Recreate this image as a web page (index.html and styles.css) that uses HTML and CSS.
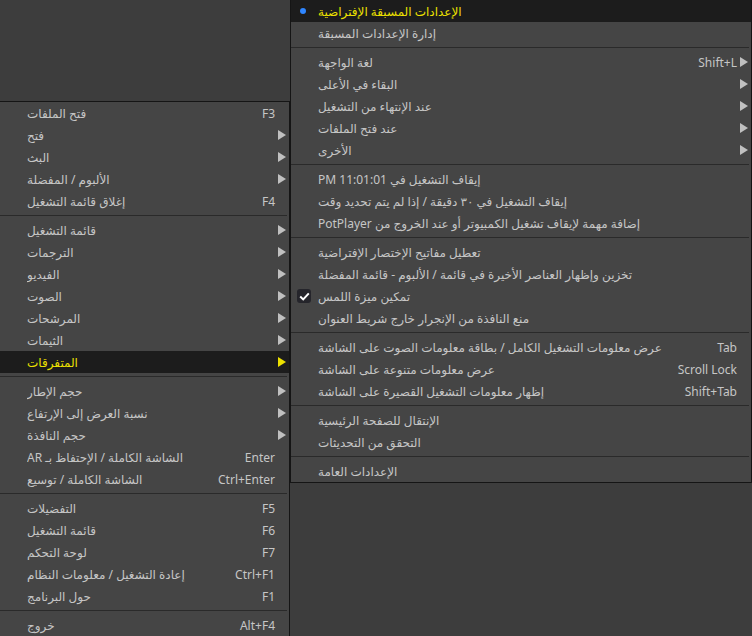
FILE: index.html
```html
<!DOCTYPE html>
<html lang="ar">
<head>
<meta charset="utf-8">
<title>Menu</title>
<link rel="stylesheet" href="styles.css">
</head>
<body>
<div class="desk">
  <div class="menu menu-main">
    <div class="item"><span class="gutter"></span><span class="label"><span dir="rtl">فتح الملفات</span></span><span class="key">F3</span><span class="sub"></span></div>
    <div class="item"><span class="gutter"></span><span class="label"><span dir="rtl">فتح</span></span><span class="key"></span><span class="sub arrow"></span></div>
    <div class="item"><span class="gutter"></span><span class="label"><span dir="rtl">البث</span></span><span class="key"></span><span class="sub arrow"></span></div>
    <div class="item"><span class="gutter"></span><span class="label"><span dir="rtl">الألبوم / المفضلة</span></span><span class="key"></span><span class="sub arrow"></span></div>
    <div class="item"><span class="gutter"></span><span class="label"><span dir="rtl">إغلاق قائمة التشغيل</span></span><span class="key">F4</span><span class="sub"></span></div>
    <div class="sep"></div>
    <div class="item"><span class="gutter"></span><span class="label"><span dir="rtl">قائمة التشغيل</span></span><span class="key"></span><span class="sub arrow"></span></div>
    <div class="item"><span class="gutter"></span><span class="label"><span dir="rtl">الترجمات</span></span><span class="key"></span><span class="sub arrow"></span></div>
    <div class="item"><span class="gutter"></span><span class="label"><span dir="rtl">الفيديو</span></span><span class="key"></span><span class="sub arrow"></span></div>
    <div class="item"><span class="gutter"></span><span class="label"><span dir="rtl">الصوت</span></span><span class="key"></span><span class="sub arrow"></span></div>
    <div class="item"><span class="gutter"></span><span class="label"><span dir="rtl">المرشحات</span></span><span class="key"></span><span class="sub arrow"></span></div>
    <div class="item"><span class="gutter"></span><span class="label"><span dir="rtl">الثيمات</span></span><span class="key"></span><span class="sub arrow"></span></div>
    <div class="item active"><span class="gutter"></span><span class="label"><span dir="rtl">المتفرقات</span></span><span class="key"></span><span class="sub arrow"></span></div>
    <div class="sep"></div>
    <div class="item"><span class="gutter"></span><span class="label"><span dir="rtl">حجم الإطار</span></span><span class="key"></span><span class="sub arrow"></span></div>
    <div class="item"><span class="gutter"></span><span class="label"><span dir="rtl">نسبة العرض إلى الإرتفاع</span></span><span class="key"></span><span class="sub arrow"></span></div>
    <div class="item"><span class="gutter"></span><span class="label"><span dir="rtl">حجم النافذة</span></span><span class="key"></span><span class="sub arrow"></span></div>
    <div class="item"><span class="gutter"></span><span class="label"><span dir="rtl">الشاشة الكاملة / الإحتفاظ بـ AR</span></span><span class="key">Enter</span><span class="sub"></span></div>
    <div class="item"><span class="gutter"></span><span class="label"><span dir="rtl">الشاشة الكاملة / توسيع</span></span><span class="key">Ctrl+Enter</span><span class="sub"></span></div>
    <div class="sep"></div>
    <div class="item"><span class="gutter"></span><span class="label"><span dir="rtl">التفضيلات</span></span><span class="key">F5</span><span class="sub"></span></div>
    <div class="item"><span class="gutter"></span><span class="label"><span dir="rtl">قائمة التشغيل</span></span><span class="key">F6</span><span class="sub"></span></div>
    <div class="item"><span class="gutter"></span><span class="label"><span dir="rtl">لوحة التحكم</span></span><span class="key">F7</span><span class="sub"></span></div>
    <div class="item"><span class="gutter"></span><span class="label"><span dir="rtl">إعادة التشغيل / معلومات النظام</span></span><span class="key">Ctrl+F1</span><span class="sub"></span></div>
    <div class="item"><span class="gutter"></span><span class="label"><span dir="rtl">حول البرنامج</span></span><span class="key">F1</span><span class="sub"></span></div>
    <div class="sep"></div>
    <div class="item"><span class="gutter"></span><span class="label"><span dir="rtl">خروج</span></span><span class="key">Alt+F4</span><span class="sub"></span></div>
  </div>

  <div class="menu menu-sub">
    <div class="item active"><span class="gutter"><span class="dot"></span></span><span class="label"><span dir="rtl">الإعدادات المسبقة الإفتراضية</span></span><span class="key"></span><span class="sub"></span></div>
    <div class="item"><span class="gutter"></span><span class="label"><span dir="rtl">إدارة الإعدادات المسبقة</span></span><span class="key"></span><span class="sub"></span></div>
    <div class="sep"></div>
    <div class="item"><span class="gutter"></span><span class="label"><span dir="rtl">لغة الواجهة</span></span><span class="key">Shift+L</span><span class="sub arrow"></span></div>
    <div class="item"><span class="gutter"></span><span class="label"><span dir="rtl">البقاء في الأعلى</span></span><span class="key"></span><span class="sub arrow"></span></div>
    <div class="item"><span class="gutter"></span><span class="label"><span dir="rtl">عند الإنتهاء من التشغيل</span></span><span class="key"></span><span class="sub arrow"></span></div>
    <div class="item"><span class="gutter"></span><span class="label"><span dir="rtl">عند فتح الملفات</span></span><span class="key"></span><span class="sub arrow"></span></div>
    <div class="item"><span class="gutter"></span><span class="label"><span dir="rtl">الأخرى</span></span><span class="key"></span><span class="sub arrow"></span></div>
    <div class="sep"></div>
    <div class="item"><span class="gutter"></span><span class="label"><span dir="rtl">إيقاف التشغيل في PM 11:01:01</span></span><span class="key"></span><span class="sub"></span></div>
    <div class="item"><span class="gutter"></span><span class="label"><span dir="rtl">إيقاف التشغيل في ٣٠ دقيقة / إذا لم يتم تحديد وقت</span></span><span class="key"></span><span class="sub"></span></div>
    <div class="item"><span class="gutter"></span><span class="label"><span dir="rtl">إضافة مهمة لإيقاف تشغيل الكمبيوتر أو عند الخروج من PotPlayer</span></span><span class="key"></span><span class="sub"></span></div>
    <div class="sep"></div>
    <div class="item"><span class="gutter"></span><span class="label"><span dir="rtl">تعطيل مفاتيح الإختصار الإفتراضية</span></span><span class="key"></span><span class="sub"></span></div>
    <div class="item"><span class="gutter"></span><span class="label"><span dir="rtl">تخزين وإظهار العناصر الأخيرة في قائمة / الألبوم - قائمة المفضلة</span></span><span class="key"></span><span class="sub"></span></div>
    <div class="item"><span class="gutter"><span class="check"><svg width="11" height="9" viewBox="0 0 11 9"><path d="M1.2 4.6 L4.2 7.4 L9.8 1.4" fill="none" stroke="#ffffff" stroke-width="2"/></svg></span></span><span class="label"><span dir="rtl">تمكين ميزة اللمس</span></span><span class="key"></span><span class="sub"></span></div>
    <div class="item"><span class="gutter"></span><span class="label"><span dir="rtl">منع النافذة من الإنجرار خارج شريط العنوان</span></span><span class="key"></span><span class="sub"></span></div>
    <div class="sep"></div>
    <div class="item"><span class="gutter"></span><span class="label"><span dir="rtl">عرض معلومات التشغيل الكامل / بطاقة معلومات الصوت على الشاشة</span></span><span class="key">Tab</span><span class="sub"></span></div>
    <div class="item"><span class="gutter"></span><span class="label"><span dir="rtl">عرض معلومات متنوعة على الشاشة</span></span><span class="key">Scroll Lock</span><span class="sub"></span></div>
    <div class="item"><span class="gutter"></span><span class="label"><span dir="rtl">إظهار معلومات التشغيل القصيرة على الشاشة</span></span><span class="key">Shift+Tab</span><span class="sub"></span></div>
    <div class="sep"></div>
    <div class="item"><span class="gutter"></span><span class="label"><span dir="rtl">الإنتقال للصفحة الرئيسية</span></span><span class="key"></span><span class="sub"></span></div>
    <div class="item"><span class="gutter"></span><span class="label"><span dir="rtl">التحقق من التحديثات</span></span><span class="key"></span><span class="sub"></span></div>
    <div class="sep"></div>
    <div class="item"><span class="gutter"></span><span class="label"><span dir="rtl">الإعدادات العامة</span></span><span class="key"></span><span class="sub"></span></div>
  </div>
</div>
</body>
</html>
```

FILE: styles.css
```css
html, body {
  margin: 0;
  padding: 0;
}
body {
  background: #3d3d3d;
  width: 752px;
  height: 636px;
  overflow: hidden;
  font-family: "Noto Sans", "DejaVu Sans", sans-serif;
  font-size: 12px;
  color: #c6c6c6;
}
.desk {
  display: flex;
  align-items: flex-start;
}
.menu {
  background: #454545;
  box-sizing: border-box;
}
.menu-main {
  margin-top: 101px;
  width: 290px;
  border-top: 1px solid #151515;
  border-right: 1px solid #151515;
  flex: none;
}
.menu-sub {
  width: 462px;
  border-left: 1px solid #151515;
  border-right: 1px solid #151515;
  border-bottom: 1px solid #151515;
  flex: none;
}
.item {
  display: flex;
  align-items: center;
  height: 22px;
  white-space: nowrap;
}
.item.active {
  background: #1c1c1c;
  color: #ece000;
}
.gutter {
  width: 27px;
  flex: none;
  display: flex;
  align-items: center;
}
.label {
  flex: 1;
  overflow: hidden;
}
.key {
  flex: none;
}
.sub {
  width: 14px;
  flex: none;
  display: flex;
  align-items: center;
}
.arrow::after {
  content: "";
  margin-left: 3px;
  border-left: 8px solid #c0c0c0;
  border-top: 5px solid transparent;
  border-bottom: 5px solid transparent;
}
.active .arrow::after {
  border-left-color: #ece000;
}
.sep {
  height: 7px;
  display: flex;
  align-items: center;
}
.sep::before {
  content: "";
  flex: 1;
  height: 1px;
  margin-right: 2px;
  background: #2a2a2a;
}
.dot {
  width: 6px;
  height: 6px;
  margin-left: 9px;
  border-radius: 50%;
  background: #2f86ff;
}
.check {
  width: 14px;
  height: 14px;
  margin-left: 6px;
  border-radius: 3px;
  background: #25252b;
  display: flex;
  align-items: center;
  justify-content: center;
}
```
